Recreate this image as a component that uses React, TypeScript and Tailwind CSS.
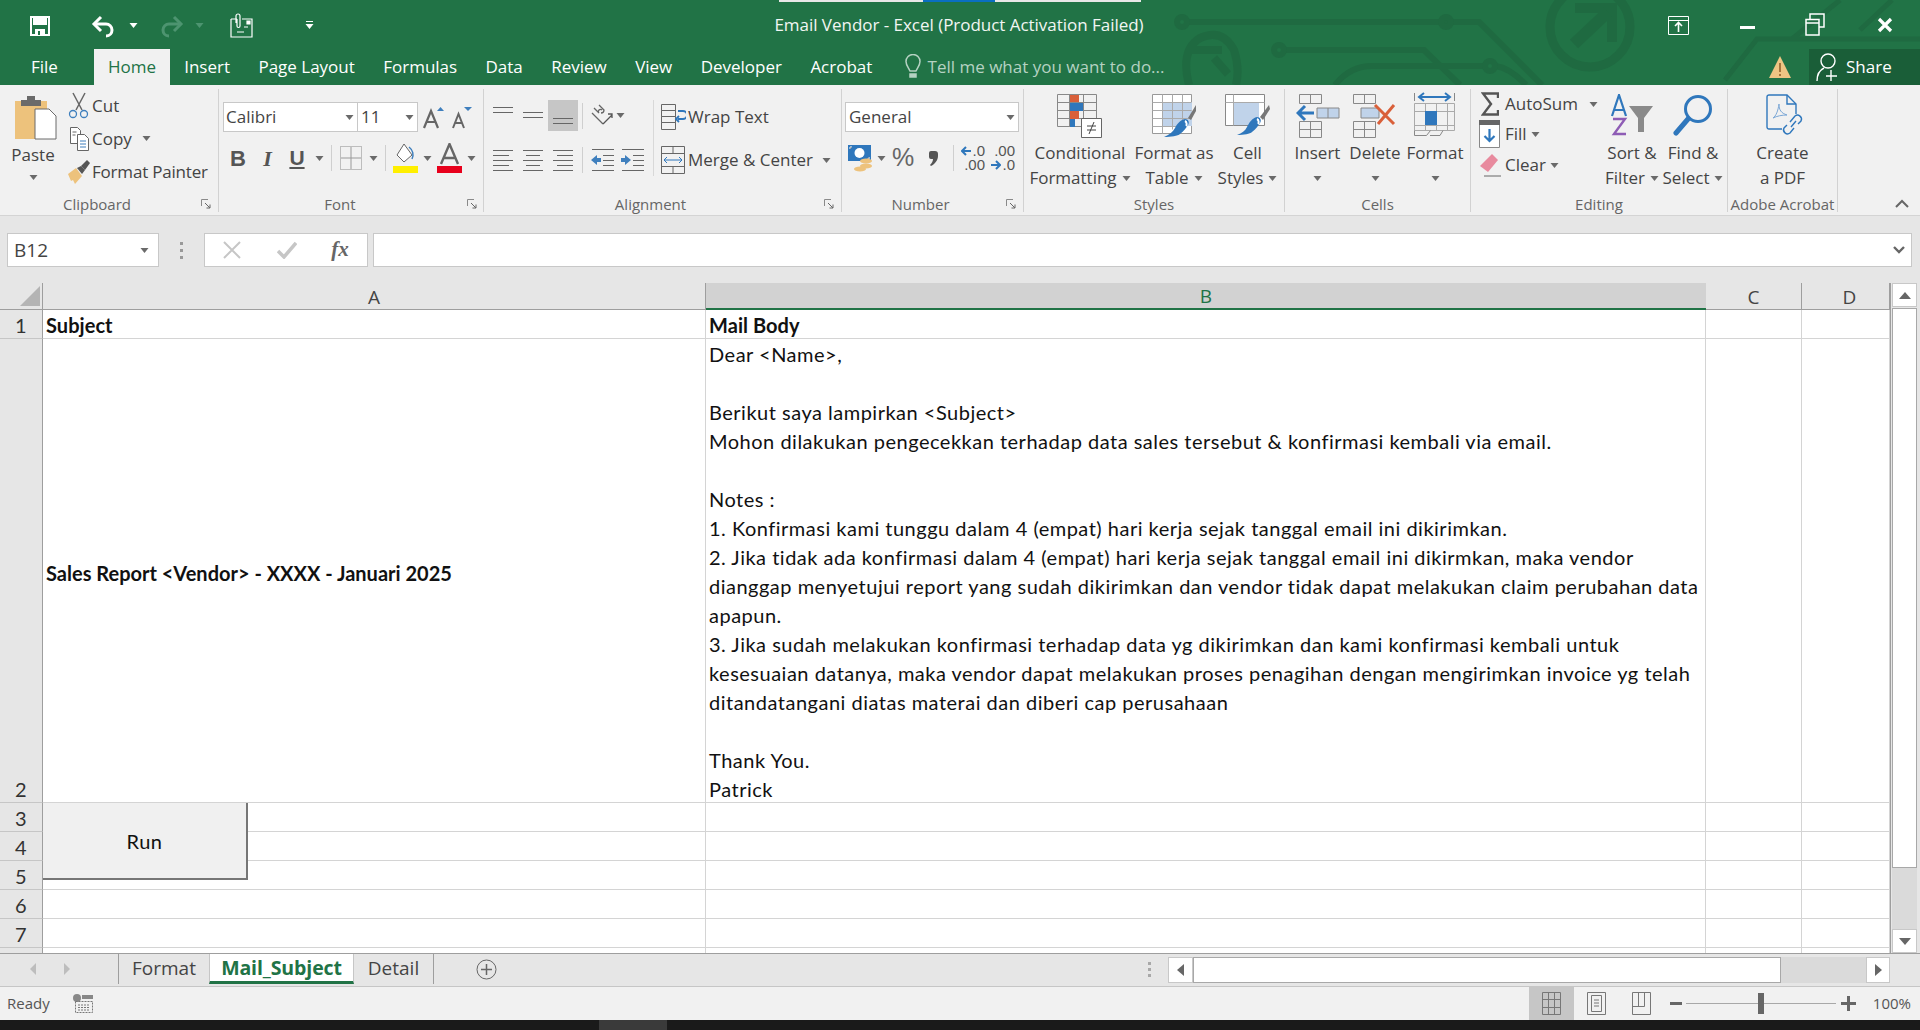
import type { ReactNode } from 'react';

// little dropdown triangle used all over the ribbon
function Caret({ className = '' }: { className?: string }) {
  return (
    <svg width="9" height="5" viewBox="0 0 9 5" className={`shrink-0 ${className}`}>
      <path d="M0.5 0h8L4.5 5z" fill="#6a6a6a" />
    </svg>
  );
}

function Launcher() {
  return (
    <svg width="11" height="11" viewBox="0 0 11 11">
      <path d="M.5 7V.5H7" fill="none" stroke="#8a8a8a" />
      <path d="M4 4l5 5M9 5.5V9H5.500" fill="none" stroke="#666" />
    </svg>
  );
}

function Group({ className, label, launcher, children }: { className: string; label?: string; launcher?: string; children: ReactNode }) {
  return (
    <div className={`flex flex-col h-[123px] shrink-0 border-r border-[#d2d2d2] ${className}`}>
      <div className="h-[107px] flex">{children}</div>
      <div className="h-[16px] flex items-center text-[15px] leading-[16px] text-[#666]">
        <div className="flex-1 text-center whitespace-nowrap">{label}</div>
        {launcher && <div className={`flex justify-center ${launcher}`}><Launcher /></div>}
      </div>
    </div>
  );
}

function Box({ className, children }: { className: string; children?: ReactNode }) {
  return <div className={`flex items-center justify-center shrink-0 ${className}`}>{children}</div>;
}

function Sep({ className = 'w-[10px]' }: { className?: string }) {
  return (
    <Box className={className}>
      <div className="w-px h-[26px] bg-[#cfcfcf]" />
    </Box>
  );
}

// big ribbon button: icon on top, two lines of text under it
function BigBtn({ className, icon, one, two, caret }: { className: string; icon: ReactNode; one: string; two?: string; caret?: boolean }) {
  return (
    <div className={`flex flex-col items-center shrink-0 text-[17px] leading-[24px] text-[#444] ${className}`}>
      <div className="h-[49px] pt-[5px] flex justify-center">{icon}</div>
      <div className="mt-[3px] whitespace-nowrap">{one}</div>
      <div className="mt-[1px] h-[24px] flex items-center gap-[5px] whitespace-nowrap">
        {two}
        {caret && <Caret />}
      </div>
    </div>
  );
}

function Lines({ y, x1 = 1, x2 = 23, w = 24, h = 24, color = '#666' }: { y: number[]; x1?: number; x2?: number; w?: number; h?: number; color?: string }) {
  return (
    <svg width={w} height={h} viewBox={`0 0 ${w} ${h}`}>
      {y.map((v) => (
        <path key={v} d={`M${x1} ${v}.5H${x2}`} stroke={color} />
      ))}
    </svg>
  );
}

function AlignLines({ kind }: { kind: 'l' | 'c' | 'r' }) {
  const rows = [2, 7, 12, 17, 22];
  const s = kind === 'l' ? [1, 21, 1, 17, 1, 21, 1, 17, 1, 21] : kind === 'c' ? [1, 21, 4, 18, 1, 21, 4, 18, 1, 21] : [1, 21, 5, 21, 1, 21, 5, 21, 1, 21];
  return (
    <svg width="22" height="24" viewBox="0 0 22 24">
      {rows.map((v, i) => (
        <path key={v} d={`M${s[i * 2]} ${v}.5H${s[i * 2 + 1]}`} stroke="#666" />
      ))}
    </svg>
  );
}

function TitleBar() {
  const tabs = ['Insert', 'Page Layout', 'Formulas', 'Data', 'Review', 'View', 'Developer', 'Acrobat'];
  return (
    <div className="relative h-[85px] bg-[#217346] text-white shrink-0 overflow-hidden">
      <svg width="1920" height="85" viewBox="0 0 1920 85" className="absolute inset-0" fill="none" stroke="#1f6a41" strokeWidth="6">
        <path d="M1186 22H1479L1542 85" />
        <circle cx="1182" cy="22" r="5" />
        <circle cx="1446" cy="22" r="5" />
        <path d="M1283 50H1424L1460 85" />
        <circle cx="1279" cy="50" r="5" />
        <path d="M1335 85Q1350 66 1372 66H1484M1496 66Q1510 68 1526 85" />
        <circle cx="1490" cy="66" r="5" />
        <path d="M1189 85Q1180 50 1200 38Q1222 28 1234 50Q1240 68 1236 85" strokeWidth="8" />
        <path d="M1190 50H1222M1214 58L1228 74" strokeWidth="8" />
        <circle cx="1590" cy="27" r="40" strokeWidth="9" />
        <path d="M1575 8H1612V42" strokeWidth="10" />
        <path d="M1608 12L1574 44" strokeWidth="12" />
        <path d="M1725 80L1757 39H1920M1792 39L1840 0M1860 30L1892 0" strokeWidth="5" />
      </svg>

      <div className="absolute top-0 left-[779px] w-[362px] h-[2px] bg-[#e8e8e8]">
        <div className="ml-[144px] w-[72px] h-[2px] bg-[#0a6fc2]" />
      </div>

      <div className="relative h-[49px] grid grid-cols-[1fr_auto_1fr] items-center">
        <div className="flex items-center pt-[2px]">
          <Box className="w-[40px] ml-[20px]">
            <svg width="20" height="20" viewBox="0 0 20 20">
              <path d="M1 1h18v18H1z" fill="none" stroke="#fff" strokeWidth="2" />
              <path d="M3 2h14v7H3zM5 13h10v6H5z" fill="#fff" />
              <path d="M8 15h2v4H8z" fill="#217346" />
            </svg>
          </Box>
          <Box className="w-[30px] ml-[29px]">
            <svg width="26" height="26" viewBox="0 0 26 26" fill="none" stroke="#fff" strokeWidth="3">
              <path d="M10 4L3 11l7 7" />
              <path d="M4 11h11a6 6 0 0 1 6 6c0 3-2 6-6 6" />
            </svg>
          </Box>
          <Caret className="ml-[10px] brightness-[3]" />
          <Box className="w-[30px] ml-[18px]">
            <svg width="26" height="26" viewBox="0 0 26 26" fill="none" stroke="#4d9470" strokeWidth="3">
              <path d="M16 4l7 7-7 7" />
              <path d="M22 11H11a6 6 0 0 0-6 6c0 3 2 6 6 6" />
            </svg>
          </Box>
          <svg width="9" height="5" viewBox="0 0 9 5" className="ml-[9px]"><path d="M.5 0h8l-4 5z" fill="#4d9470" /></svg>
          <Box className="w-[26px] ml-[25px]">
            <svg width="24" height="26" viewBox="0 0 24 26" fill="none" stroke="#fff" strokeWidth="1.2">
              <path d="M1 6h6M12 6h10v18H1V6" />
              <path d="M6 10V3a2 2 0 0 1 4 0v10a1.500 1.500 0 0 1-3 0V6" />
              <path d="M14 14h4M7 19h7" />
              <path d="M17 8h3v3h-3z" fill="#fff" />
            </svg>
          </Box>
          <svg width="9" height="9" viewBox="0 0 9 9" className="ml-[50px]"><path d="M1 0h7v1H1zM.5 3h8l-4 5z" fill="#fff" /></svg>
        </div>
        <div className="text-[17px] tracking-[-0.030px] -translate-x-[1px] text-[#f1f6f3] whitespace-nowrap">Email Vendor - Excel (Product Activation Failed)</div>
        <div className="flex items-center justify-end pt-[1px]">
          <Box className="w-[22px]">
            <svg width="21" height="19" viewBox="0 0 21 19" fill="none" stroke="#fff">
              <path d="M.5.500h20v18H.5zM.5 4.500h20" />
              <path d="M10.500 16V7M7 10l3.500-3.500L14 10" strokeWidth="1.600" />
            </svg>
          </Box>
          <Box className="w-[16px] ml-[50px]"><div className="w-[15px] h-[3px] bg-white mt-[5px]" /></Box>
          <Box className="w-[20px] ml-[50px]">
            <svg width="20" height="24" viewBox="0 0 20 24" fill="none" stroke="#fff" strokeWidth="1.500">
              <path d="M5 6V1h14v13h-5" />
              <path d="M1 6.500h13V22H1zM1 10h13" />
            </svg>
          </Box>
          <Box className="w-[16px] ml-[52px] mr-[27px]">
            <svg width="16" height="16" viewBox="0 0 16 16"><path d="M2 2l12 12M14 2L2 14" stroke="#fff" strokeWidth="3.200" /></svg>
          </Box>
        </div>
      </div>

      <div className="relative h-[36px] flex items-stretch text-[17px] leading-[36px] whitespace-nowrap">
        <div className="w-[94px] pl-[31px] shrink-0">File</div>
        <div className="w-[76px] text-center bg-[#f1f1f1] text-[#217346] shrink-0">Home</div>
        {tabs.map((t) => (
          <div key={t} className="px-[14.200px] first:pl-[15px] shrink-0">{t}</div>
        ))}
        <Box className="w-[24px] ml-[14px]">
          <svg width="16" height="26" viewBox="0 0 16 26" fill="none" stroke="#b5d2c2" strokeWidth="1.500">
            <path d="M5 17C3 13 1 11 1 7.500a7 7 0 0 1 14 0C15 11 13 13 11 17z" />
            <path d="M5 20h6v3H5z" fill="#b5d2c2" />
          </svg>
        </Box>
        <div className="ml-[3px] text-[#b5d2c2]">Tell me what you want to do...</div>
        <div className="flex-1" />
        <Box className="w-[24px] mr-[17px]">
          <svg width="24" height="24" viewBox="0 0 24 24">
            <path d="M12 1L23 23H1z" fill="#edc584" />
            <path d="M12 8v9M12 19v2" stroke="#8a5a24" strokeWidth="1.500" />
          </svg>
        </Box>
        <div className="w-[111px] bg-[#1a5e38] flex items-center pl-[7px] shrink-0">
          <svg width="24" height="30" viewBox="0 0 24 30" fill="none" stroke="#fff" strokeWidth="1.400">
            <circle cx="12" cy="9" r="7" />
            <path d="M1 29c0-7 3-11 7-13M15 18v11M10 24h11" />
          </svg>
          <span className="ml-[6px]">Share</span>
        </div>
      </div>
    </div>
  );
}

function Ribbon() {
  const label = 'text-[17px] text-[#444] whitespace-nowrap';
  return (
    <div className="h-[131px] bg-[#f1f1f1] border-b border-[#d4d4d4] pt-[4px] flex shrink-0">
      <Group className="w-[219px]" label="Clipboard" launcher="w-[24px]">
        <div className="w-[66px] flex flex-col items-center text-[17px] leading-[20px] text-[#444]">
          <svg width="42" height="46" viewBox="0 0 42 46" className="mt-[5px] ml-[6px]">
            <path d="M0 7h32v38H0z" fill="#edc27c" />
            <path d="M6 6h20v6H6zM12 2h8v5h-8z" fill="#6a6a6a" />
            <path d="M20 22h14l7 7v23H20z" fill="#fff" stroke="#6a6a6a" transform="translate(0 -7)" />
          </svg>
          <div className="mt-[5px]">Paste</div>
          <Caret className="mt-[10px]" />
        </div>
        <div className="flex flex-col">
          <div className={`h-[33px] flex items-center ${label}`}>
            <Box className="w-[26px]">
              <svg width="22" height="27" viewBox="0 0 22 27" fill="none">
                <path d="M5 1l9 17M17 1L8 18" stroke="#666" strokeWidth="1.500" />
                <circle cx="5" cy="22" r="3.500" stroke="#3f7fbd" strokeWidth="1.300" />
                <circle cx="16" cy="22" r="3.500" stroke="#3f7fbd" strokeWidth="1.300" />
              </svg>
            </Box>
            Cut
          </div>
          <div className={`h-[33px] flex items-center ${label}`}>
            <Box className="w-[26px]">
              <svg width="21" height="26" viewBox="0 0 21 26" fill="none" stroke="#666">
                <path d="M1.500 1.500h7l3 3v13h-10z" fill="#fff" />
                <path d="M8.500 8.500h7l4 4v12h-11z" fill="#fff" />
                <path d="M11 15h6M11 18h6M11 21h6" stroke="#3f7fbd" />
                <path d="M3.500 6h4M3.500 9h3" />
              </svg>
            </Box>
            Copy
            <Caret className="ml-[10px]" />
          </div>
          <div className={`h-[33px] flex items-center tracking-[-0.200px] ${label}`}>
            <Box className="w-[26px]">
              <svg width="24" height="26" viewBox="0 0 24 26">
                <path d="M1 15l8-6 6 8-7 8-2-4-2 1z" fill="#edc27c" />
                <path d="M10 9l5 6 3-4-4-4z" fill="#555" />
                <path d="M14 7l6-6 3 3-5 7z" fill="#555" />
              </svg>
            </Box>
            Format Painter
          </div>
        </div>
      </Group>

      <Group className="w-[265px]" label="Font" launcher="w-[22px]">
        <div className="flex flex-col pl-[4px]">
          <div className="mt-[13px] h-[30px] flex items-center">
            <div className="w-[135px] h-[30px] bg-white border border-[#c8c8c8] flex items-center justify-between pl-[2px] pr-[3px] text-[17px] text-[#444]">
              Calibri
              <Caret />
            </div>
            <div className="w-[61px] h-[30px] -ml-px bg-white border border-[#c8c8c8] flex items-center justify-between pl-[3px] pr-[3px] text-[17px] text-[#444]">
              11
              <Caret />
            </div>
            <Box className="w-[24px] ml-[4px]">
              <svg width="24" height="26" viewBox="0 0 24 26">
                <path d="M2 24L9 7l7 17M5 18h8" fill="none" stroke="#666" strokeWidth="2.200" />
                <path d="M15 7l3.500-4L22 7z" fill="#3f7fbd" />
              </svg>
            </Box>
            <Box className="w-[24px] ml-[4px]">
              <svg width="24" height="26" viewBox="0 0 24 26">
                <path d="M3 24L8.500 10 14 24M5 19h7" fill="none" stroke="#666" strokeWidth="2" />
                <path d="M14 3h8l-4 4z" fill="#3f7fbd" />
              </svg>
            </Box>
          </div>
          <div className="mt-[13px] h-[26px] flex items-center text-[#555]">
            <Box className="w-[30px] font-bold text-[22px] font-['Liberation_Sans',sans-serif]">B</Box>
            <Box className="w-[29px] font-bold italic text-[22px] font-['Liberation_Serif',serif]">I</Box>
            <Box className="w-[30px] font-bold text-[21px] underline font-['Liberation_Sans',sans-serif]">U</Box>
            <Box className="w-[14px]"><Caret /></Box>
            <Sep />
            <Box className="w-[30px]">
              <svg width="22" height="24" viewBox="0 0 22 24" fill="none">
                <path d="M.5.500h21v23H.5z" stroke="#888" strokeDasharray="1 1" />
                <path d="M11 1v22M1 12h20" stroke="#999" />
              </svg>
            </Box>
            <Box className="w-[14px]"><Caret /></Box>
            <Sep />
            <Box className="w-[30px]">
              <svg width="25" height="30" viewBox="0 0 25 30">
                <path d="M11 1l-7 11 7 7 8-7z" fill="#fff" stroke="#666" />
                <path d="M16 4c4 3 5 8 3 12" fill="none" stroke="#3f7fbd" strokeWidth="1.500" />
                <path d="M0 23h25v7H0z" fill="#ffef00" />
              </svg>
            </Box>
            <Box className="w-[14px]"><Caret /></Box>
            <Box className="w-[30px]">
              <svg width="25" height="30" viewBox="0 0 25 30">
                <path d="M4 21L12.500 1 21 21M7 15h11" fill="none" stroke="#666" strokeWidth="2.400" />
                <path d="M0 23h25v7H0z" fill="#e8001c" />
              </svg>
            </Box>
            <Box className="w-[14px]"><Caret /></Box>
          </div>
        </div>
      </Group>

      <Group className="w-[358px]" label="Alignment" launcher="w-[24px]">
        <div className="pl-[4px] w-[164px] shrink-0">
          <div className="mt-[11px] h-[31px] flex items-center">
            <Box className="w-[30px]"><Lines w={22} h={24} x2={21} y={[3, 8]} /></Box>
            <Box className="w-[30px]"><Lines w={22} h={24} x2={21} y={[8, 13]} /></Box>
            <Box className="w-[30px] h-[31px] bg-[#c6c6c6]"><Lines w={22} h={24} x2={21} y={[14, 19]} /></Box>
            <Sep className="w-[8px]" />
            <Box className="w-[30px] ml-[2px]">
              <svg width="24" height="24" viewBox="0 0 24 24" fill="none" stroke="#666" strokeWidth="1.300">
                <path d="M1 9l11 11M3 4l5 5a2 2 0 0 1 3-3M8 1l5 5a3 3 0 0 1-3 3" />
                <path d="M12 20l9-9M17 10h4v4" stroke="#555" />
              </svg>
            </Box>
            <Caret className="-ml-[2px]" />
          </div>
          <div className="mt-[15px] h-[28px] flex items-center">
            <Box className="w-[30px]"><AlignLines kind="l" /></Box>
            <Box className="w-[30px]"><AlignLines kind="c" /></Box>
            <Box className="w-[30px]"><AlignLines kind="r" /></Box>
            <Sep className="w-[8px]" />
            <Box className="w-[30px] ml-[2px]">
              <svg width="24" height="24" viewBox="0 0 24 24">
                <path d="M0 12l6-5v3h4v4H6v3z" fill="#3f7fbd" />
                <path d="M1 1.500h22M12 7.500h11M12 12.500h11M12 17.500h11M1 22.500h22" stroke="#666" />
              </svg>
            </Box>
            <Box className="w-[30px]">
              <svg width="24" height="24" viewBox="0 0 24 24">
                <path d="M10 12L4 7v3H0v4h4v3z" fill="#3f7fbd" />
                <path d="M1 1.500h22M12 7.500h11M12 12.500h11M12 17.500h11M1 22.500h22" stroke="#666" />
              </svg>
            </Box>
          </div>
        </div>
        <Box className="w-px h-[76px] bg-[#d8d8d8] mt-[11px] ml-[5px]" />
        <div className="ml-[7px]">
          <div className={`mt-[14px] h-[28px] flex items-center ${label}`}>
            <svg width="25" height="26" viewBox="0 0 25 26" fill="none" className="mr-[2px]">
              <path d="M.5.500h14v6H.5zM.5 6.500h14v6H.5zM.5 12.500h14v6H.5zM.5 18.500h14v7H.5z" stroke="#666" />
              <path d="M17 7h5a2 2 0 0 1 0 8h-5M18 12l-3 3 3 3" stroke="#2f77bc" strokeWidth="1.800" />
            </svg>
            Wrap Text
          </div>
          <div className={`mt-[15px] h-[28px] flex items-center ${label}`}>
            <svg width="24" height="28" viewBox="0 0 24 28" fill="none" className="mr-[3px]">
              <path d="M.5.500h23v27H.5zM.5 7.500h23M.5 20.500h23M12 .5v7M12 20.500v7" stroke="#666" />
              <path d="M3 14h18M6 11l-3 3 3 3M18 11l3 3-3 3" stroke="#2f77bc" />
            </svg>
            Merge &amp; Center
            <Caret className="ml-[9px]" />
          </div>
        </div>
      </Group>

      <Group className="w-[182px]" label="Number" launcher="w-[24px]">
        <div className="pl-[3px]">
          <div className="mt-[13px] w-[174px] h-[30px] bg-white border border-[#c8c8c8] flex items-center justify-between pl-[3px] pr-[3px] text-[17px] text-[#444]">
            General
            <Caret />
          </div>
          <div className="mt-[13px] h-[26px] flex items-center text-[#666]">
            <Box className="w-[30px]">
              <svg width="24" height="28" viewBox="0 0 24 28">
                <path d="M0 1h23v16H0z" fill="#2f77bc" />
                <circle cx="11.500" cy="9" r="5" fill="#fff" />
                <path d="M4 3h-2v2M19 15h2v-2" stroke="#fff" />
                <ellipse cx="18" cy="17" rx="6" ry="2.500" fill="#edc27c" />
                <ellipse cx="18" cy="22" rx="6" ry="2.500" fill="#edc27c" />
                <ellipse cx="12" cy="25" rx="6" ry="2.500" fill="#edc27c" />
              </svg>
            </Box>
            <Box className="w-[13px]"><Caret /></Box>
            <Box className="w-[30px] text-[25px] font-['Liberation_Sans',sans-serif]">%</Box>
            <Box className="w-[31px]">
              <svg width="9" height="15" viewBox="0 0 9 15"><path d="M2 0h4a3 3 0 0 1 3 3v2c0 4-3 8-7 10l-1-1c2-2 3-4 3-6H2a2 2 0 0 1-2-2V2a2 2 0 0 1 2-2z" fill="#555" /></svg>
            </Box>
            <Sep className="w-[8px]" />
            <div className="w-[28px] text-[15px] leading-[12px] font-['Liberation_Sans',sans-serif] text-[#555] text-right">
              <div className="flex items-center justify-end gap-[1px]">
                <svg width="10" height="10" viewBox="0 0 10 10" fill="none"><path d="M10 5H2M5 1L1 5l4 4" stroke="#2f77bc" strokeWidth="2" /></svg>
                .0
              </div>
              <div className="mt-[2px]">.00</div>
            </div>
            <div className="w-[30px] text-[15px] leading-[12px] font-['Liberation_Sans',sans-serif] text-[#555] text-right">
              <div>.00</div>
              <div className="mt-[2px] flex items-center justify-end gap-[1px]">
                <svg width="10" height="10" viewBox="0 0 10 10" fill="none"><path d="M0 5h8M5 1l4 4-4 4" stroke="#2f77bc" strokeWidth="2" /></svg>
                .0
              </div>
            </div>
          </div>
        </div>
      </Group>

      <Group className="w-[261px]" label="Styles">
        <BigBtn
          className="w-[106px] ml-[3px]"
          one="Conditional"
          two="Formatting"
          caret
          icon={
            <svg width="46" height="44" viewBox="0 0 46 44" fill="none">
              <path d="M.5.500h39v32H.5zM.5 8.500h39M.5 16.500h39M.5 24.500h39M12.500.5v32M26.500.5v32" stroke="#888" />
              <path d="M13 1h9v7h-9z" fill="#d9603a" />
              <path d="M13 9h13v8H13z" fill="#2f77bc" />
              <path d="M13 17h9v8h-9z" fill="#d9603a" />
              <path d="M13 25h5v8h-5z" fill="#2f77bc" />
              <path d="M24.500 24.500h20v19h-20z" fill="#fff" stroke="#666" />
              <path d="M30 32h9M30 36h9M37 28l-5 12" stroke="#444" />
            </svg>
          }
        />
        <BigBtn
          className="w-[82px]"
          one="Format as"
          two="Table"
          caret
          icon={
            <svg width="44" height="44" viewBox="0 0 44 44" fill="none">
              <path d="M.5.500h39v39H.5z" fill="#fff" stroke="#999" />
              <path d="M10 8h30v24H10z" fill="#c0d3ea" />
              <path d="M.5 8.500h39M.5 16.500h39M.5 24.500h39M.5 32.500h30M10.500.5v39M20.500.5v35M30.500.5v30" stroke="#aaa" />
              <path d="M44 11L36 24l3 2 5-9z" fill="#777" />
              <path d="M33 25c3 0 5 3 3 6s-4 6-8 9c-2 2-9 3-16 3 5-2 9-5 11-9s5-8 10-9z" fill="#2f77bc" />
              <path d="M33 27c2 1 2 4 1 5" stroke="#fff" strokeWidth="2" />
            </svg>
          }
        />
        <BigBtn
          className="w-[65px]"
          one="Cell"
          two="Styles"
          caret
          icon={
            <svg width="45" height="44" viewBox="0 0 45 44" fill="none">
              <path d="M.5.500h39v31H.5z" fill="#fff" stroke="#888" />
              <path d="M8 8h26v23H8z" fill="#c0d3ea" />
              <path d="M.5 8.500h39M8.500.5v31" stroke="#aaa" />
              <path d="M44 11L35 23l3 3 7-11z" fill="#777" />
              <path d="M32 23c3 0 5 3 3 6s-4 6-8 9c-2 2-8 3-15 3 5-2 8-4 10-8s5-9 10-10z" fill="#2f77bc" />
              <path d="M32 25c2 1 2 4 1 5" stroke="#fff" strokeWidth="2" />
            </svg>
          }
        />
      </Group>

      <Group className="w-[186px]" label="Cells">
        <BigBtn
          className="w-[59px] ml-[3px]"
          one="Insert"
          caret
          icon={
            <svg width="44" height="44" viewBox="0 0 44 44" fill="none">
              <path d="M3.500.5h22v9h-22zM14.500.5v9M3.500 27.500h22v16h-22zM3.500 35.500h22M14.500 27.500v16" stroke="#888" />
              <path d="M21 14h22v10H21z" fill="#c0d3ea" stroke="#888" />
              <path d="M32 14v10" stroke="#888" />
              <path d="M18 19H3M9 12l-7 7 7 7" stroke="#2f77bc" strokeWidth="3" />
            </svg>
          }
        />
        <BigBtn
          className="w-[56px]"
          one="Delete"
          caret
          icon={
            <svg width="44" height="44" viewBox="0 0 44 44" fill="none">
              <path d="M.5.5h22v9H.5zM11.500.5v9M.5 27.500h22v16H.5zM.5 35.500h22M11.500 27.500v16" stroke="#888" />
              <path d="M8 14h18v10H8z" fill="#c0d3ea" stroke="#888" />
              <path d="M22 11l19 19M41 11L25 30" stroke="#d9603a" strokeWidth="3" />
            </svg>
          }
        />
        <BigBtn
          className="w-[64px]"
          one="Format"
          caret
          icon={
            <svg width="42" height="48" viewBox="0 0 42 48" fill="none" className="-mt-[5px]">
              <path d="M.5 4v8M40.500 4v8" stroke="#888" />
              <path d="M5 8h31M10 4L5 8l5 4M31 4l5 4-5 4" stroke="#2f77bc" strokeWidth="2" />
              <path d="M.5 14.500h40v27H.5zM.5 22.500h40M.5 36.500h40M11.500 14.500v27M22.500 14.500v27M33.500 14.500v27" stroke="#aaa" />
              <path d="M11 22h12v14H11z" fill="#2f77bc" />
              <path d="M.5 41.500v5h12l4-5M16 46.500h10l3-5" stroke="#888" />
            </svg>
          }
        />
      </Group>

      <Group className="w-[257px]" label="Editing">
        <div className="w-[131px] shrink-0">
          <div className={`h-[30px] flex items-center ${label}`}>
            <Box className="w-[34px] pl-[3px]">
              <svg width="18" height="24" viewBox="0 0 18 24" fill="none"><path d="M17 6V1.500H2L10 12 2 22.500h15V18" stroke="#555" strokeWidth="2.400" /></svg>
            </Box>
            AutoSum
            <Caret className="ml-[11px]" />
          </div>
          <div className={`h-[30px] flex items-center ${label}`}>
            <Box className="w-[34px] pl-[3px]">
              <svg width="21" height="28" viewBox="0 0 21 28">
                <path d="M.5.500h20v27H.5z" fill="#fff" stroke="#888" />
                <path d="M0 0h21v5H0z" fill="#666" />
                <path d="M10.500 9v12M5.500 16l5 5 5-5" fill="none" stroke="#2f77bc" strokeWidth="2.200" />
              </svg>
            </Box>
            Fill
            <Caret className="ml-[4px]" />
          </div>
          <div className={`h-[32px] flex items-center ${label}`}>
            <Box className="w-[34px] pl-[3px]">
              <svg width="22" height="24" viewBox="0 0 22 24">
                <path d="M13 1l6 6L9 19l-8-6z" fill="#e88a9e" />
                <path d="M5 23h17" stroke="#666" />
              </svg>
            </Box>
            Clear
            <Caret className="ml-[4px]" />
          </div>
        </div>
        <BigBtn
          className="w-[60px]"
          one="Sort &"
          two="Filter"
          caret
          icon={
            <svg width="44" height="42" viewBox="0 0 44 42" fill="none">
              <path d="M2 22L9 1l7 21M4.500 16h9" stroke="#2f77bc" strokeWidth="2.200" />
              <path d="M3 25h12L4 40h12" stroke="#8e5cb5" strokeWidth="2.400" />
              <path d="M19 12h24L34 24v14h-6V24z" fill="#8a8a8a" />
            </svg>
          }
        />
        <BigBtn
          className="w-[62px]"
          one="Find &"
          two="Select"
          caret
          icon={
            <svg width="40" height="42" viewBox="0 0 40 42" fill="none">
              <circle cx="25" cy="15" r="12.500" stroke="#2f77bc" strokeWidth="3" />
              <path d="M15 25L3 39" stroke="#2f77bc" strokeWidth="5" strokeLinecap="round" />
            </svg>
          }
        />
      </Group>

      <Group className="w-[110px]" label="Adobe Acrobat">
        <BigBtn
          className="w-[109px]"
          one="Create"
          two="a PDF"
          icon={
            <svg width="40" height="44" viewBox="0 0 40 44" fill="none" stroke="#2f77bc" strokeWidth="1.400" className="ml-[6px]">
              <path d="M16 35H3a2 2 0 0 1-2-2V3a2 2 0 0 1 2-2h18l9 9v10" />
              <path d="M21 1v9h9" />
              <path d="M7 24c3-2 5-7 6-14 0 6 2 9 8 11-5 0-10 1-14 3z" stroke="#7ba7d6" strokeWidth="1" />
              <path d="M24 28l5-6a4 4 0 0 1 6 5l-3 3M28 34l-4 5a4 4 0 0 1-6-5l3-3M25 33l5-6" />
            </svg>
          }
        />
      </Group>

      <div className="flex-1 flex items-end justify-end pr-[11px] pb-[4px] h-[123px]">
        <svg width="14" height="9" viewBox="0 0 14 9" fill="none"><path d="M1 8l6-6 6 6" stroke="#666" strokeWidth="2" /></svg>
      </div>
    </div>
  );
}

function FormulaBar() {
  return (
    <div className="h-[67px] bg-[#e6e6e6] pt-[17px] flex items-start shrink-0">
      <div className="ml-[7px] w-[152px] h-[34px] bg-white border border-[#c8c8c8] flex items-center justify-between pl-[6px] pr-[9px] text-[19px] text-[#444]">
        B12
        <Caret />
      </div>
      <div className="w-[45px] h-[34px] flex flex-col items-center justify-center gap-[4px]">
        <div className="w-[3px] h-[3px] bg-[#999]" />
        <div className="w-[3px] h-[3px] bg-[#999]" />
        <div className="w-[3px] h-[3px] bg-[#999]" />
      </div>
      <div className="w-[164px] h-[34px] bg-white border border-[#c8c8c8] flex items-center">
        <Box className="w-[54px]">
          <svg width="18" height="18" viewBox="0 0 18 18"><path d="M1 1l16 16M17 1L1 17" stroke="#c6c6c6" strokeWidth="2" /></svg>
        </Box>
        <Box className="w-[56px]">
          <svg width="20" height="18" viewBox="0 0 20 18" fill="none"><path d="M1 10l6 6L19 2" stroke="#c6c6c6" strokeWidth="3.500" /></svg>
        </Box>
        <Box className="w-[50px] font-['Liberation_Serif',serif] italic font-bold text-[21px] text-[#666]">fx</Box>
      </div>
      <div className="ml-[5px] mr-[8px] flex-1 h-[34px] bg-white border border-[#c8c8c8] flex items-center justify-end pr-[6px]">
        <svg width="12" height="9" viewBox="0 0 12 9" fill="none"><path d="M1 1l5 5 5-5" stroke="#666" strokeWidth="2.400" /></svg>
      </div>
    </div>
  );
}

const body = [
  'Dear <Name>,',
  '',
  'Berikut saya lampirkan <Subject>',
  'Mohon dilakukan pengecekkan terhadap data sales tersebut & konfirmasi kembali via email.',
  '',
  'Notes :',
  '1. Konfirmasi kami tunggu dalam 4 (empat) hari kerja sejak tanggal email ini dikirimkan.',
  '2. Jika tidak ada konfirmasi dalam 4 (empat) hari kerja sejak tanggal email ini dikirmkan, maka vendor',
  'dianggap menyetujui report yang sudah dikirimkan dan vendor tidak dapat melakukan claim perubahan data',
  'apapun.',
  '3. Jika sudah melakukan konfirmasi terhadap data yg dikirimkan dan kami konfirmasi kembali untuk',
  'kesesuaian datanya, maka vendor dapat melakukan proses penagihan dengan mengirimkan invoice yg telah',
  'ditandatangani diatas materai dan diberi cap perusahaan',
  '',
  'Thank You.',
  'Patrick',
];

function RowHead({ n, end }: { n?: number; end?: boolean }) {
  return (
    <div className={`bg-[#e6e6e6] border-r border-[#9e9e9e] border-b border-b-[#c6c6c6] flex justify-center text-[20px] text-[#333] ${end ? 'items-end leading-[26px]' : 'items-center pt-[2px]'}`}>
      {n}
    </div>
  );
}

function Sheet() {
  const cell = 'border-r border-b border-[#d4d4d4]';
  const head = "bg-[#e6e6e6] border-r border-b border-[#9e9e9e] flex items-center justify-center pt-[2px] font-['Open_Sans',sans-serif] text-[19px] tracking-normal text-[#444]";
  const empties = [3, 4, 5, 6, 7];
  return (
    <div className="h-[670px] flex shrink-0 bg-white">
      <div className="relative w-[1890px] grid grid-cols-[43px_663px_1000px_96px_88px] grid-rows-[27px_29px_464px_29px_29px_29px_29px_29px_5px] font-['Lato',sans-serif] text-[20px] tracking-[0.500px] text-[#111] overflow-hidden">
        <div className="bg-[#e6e6e6] border-r border-b border-[#9e9e9e] flex items-end justify-end pb-[3px] pr-[2px]">
          <svg width="20" height="20" viewBox="0 0 20 20"><path d="M20 0v20H0z" fill="#b4b4b4" /></svg>
        </div>
        <div className={head}>A</div>
        <div className="bg-[#d2d2d2] border-b-2 border-[#217346] flex items-center justify-center pt-[2px] font-['Open_Sans',sans-serif] text-[19px] tracking-normal text-[#217346]">B</div>
        <div className={head}>C</div>
        <div className={`${head} pl-[8px]`}>D</div>

        <RowHead n={1} />
        <div className={`${cell} font-bold tracking-[0.050px] flex items-center pl-[3px] pt-[2px]`}>Subject</div>
        <div className={`${cell} font-bold tracking-[0.050px] flex items-center pl-[3px] pt-[2px]`}>Mail Body</div>
        <div className={cell} />
        <div className={cell} />

        <RowHead n={2} end />
        <div className={`${cell} font-bold tracking-normal flex items-center pl-[3px] pt-[4px]`}>{'Sales Report <Vendor> - XXXX - Januari 2025'}</div>
        <div className={`${cell} pl-[3px] pt-[1px] leading-[29px] whitespace-pre`}>
          {body.map((line, i) => (
            <div key={i} className="h-[29px]">{line}</div>
          ))}
        </div>
        <div className={cell} />
        <div className={cell} />

        {empties.map((n) => (
          <div key={n} className="contents">
            <RowHead n={n} />
            <div className={cell} />
            <div className={cell} />
            <div className={cell} />
            <div className={cell} />
          </div>
        ))}
        <div className="bg-[#e6e6e6] border-r border-[#9e9e9e]" />
        <div className="border-r border-[#d4d4d4]" />
        <div className="border-r border-[#d4d4d4]" />
        <div className="border-r border-[#d4d4d4]" />
        <div className="border-r border-[#d4d4d4]" />

        <div className="absolute left-[43px] top-[520px] w-[205px] h-[77px] bg-[#f0f0f0] border-r-2 border-b-2 border-[#767676] flex items-center justify-center pt-[1px] text-[#111]">
          Run
        </div>
      </div>

      <div className="w-[30px] bg-[#e6e6e6] border-l border-[#9e9e9e] pl-[1px] flex flex-col">
        <div className="w-[25px] h-[24px] bg-white border border-[#c8c8c8] flex items-center justify-center">
          <svg width="12" height="7" viewBox="0 0 12 7"><path d="M6 0l6 7H0z" fill="#666" /></svg>
        </div>
        <div className="w-[25px] h-[560px] bg-white border border-[#a8a8a8] mt-[1px]" />
        <div className="w-[25px] flex-1 bg-[#dadada]" />
        <div className="w-[25px] h-[24px] bg-white border border-[#c8c8c8] flex items-center justify-center">
          <svg width="12" height="7" viewBox="0 0 12 7"><path d="M6 7L0 0h12z" fill="#666" /></svg>
        </div>
      </div>
    </div>
  );
}

function TabStrip() {
  return (
    <div className="h-[34px] bg-[#e6e6e6] border-t border-[#9e9e9e] border-b border-b-[#c6c6c6] flex items-start shrink-0 text-[19px] leading-[29px] text-[#444]">
      <div className="w-[118px] h-[30px] flex items-center shrink-0">
        <svg width="6" height="12" viewBox="0 0 6 12" className="ml-[30px]"><path d="M6 0v12L0 6z" fill="#bdbdbd" /></svg>
        <svg width="6" height="12" viewBox="0 0 6 12" className="ml-[28px]"><path d="M0 0v12l6-6z" fill="#bdbdbd" /></svg>
      </div>
      <div className="w-[91px] h-[30px] border-l border-[#9e9e9e] text-center shrink-0">Format</div>
      <div className="w-[145px] h-[30px] bg-white border-x border-[#c6c6c6] border-b-[3px] border-b-[#217346] text-center font-bold text-[#217346] leading-[28px] text-[19.500px] tracking-[-0.100px] shrink-0">Mail_Subject</div>
      <div className="w-[80px] h-[30px] border-r border-[#9e9e9e] text-center shrink-0">Detail</div>
      <Box className="w-[24px] h-[30px] ml-[40px]">
        <svg width="21" height="21" viewBox="0 0 21 21" fill="none" stroke="#666">
          <circle cx="10.500" cy="10.500" r="9.500" />
          <path d="M10.500 5v11M5 10.500h11" strokeWidth="1.500" />
        </svg>
      </Box>
      <div className="flex-1 h-[30px] flex justify-end items-center pr-[17px]">
        <div className="flex flex-col gap-[3px]">
          <div className="w-[3px] h-[3px] bg-[#a8a8a8]" />
          <div className="w-[3px] h-[3px] bg-[#a8a8a8]" />
          <div className="w-[3px] h-[3px] bg-[#a8a8a8]" />
        </div>
      </div>
      <div className="w-[722px] mt-[3px] h-[26px] flex shrink-0">
        <Box className="w-[25px] h-[26px] bg-white border border-[#c8c8c8]">
          <svg width="7" height="12" viewBox="0 0 7 12"><path d="M7 0v12L0 6z" fill="#666" /></svg>
        </Box>
        <div className="w-[588px] h-[26px] bg-white border border-[#a8a8a8]" />
        <div className="w-[85px] h-[26px] bg-[#dadada]" />
        <Box className="w-[24px] h-[26px] bg-white border border-[#c8c8c8]">
          <svg width="7" height="12" viewBox="0 0 7 12"><path d="M0 0v12l7-6z" fill="#666" /></svg>
        </Box>
      </div>
      <div className="w-[30px] shrink-0" />
    </div>
  );
}

function StatusBar() {
  return (
    <div className="h-[33px] bg-[#f1f1f1] flex items-center shrink-0 text-[15px] text-[#555]">
      <span className="ml-[7px]">Ready</span>
      <svg width="20" height="19" viewBox="0 0 20 19" className="ml-[23px]" fill="none">
        <circle cx="4" cy="4" r="4" fill="#888" />
        <path d="M9 1h11v4H9z" fill="#888" />
        <path d="M2.500 7.500h17v11h-17zM5 11h12M5 13.500h12M5 16h12" stroke="#777" strokeDasharray="2 1" />
      </svg>
      <div className="flex-1" />
      <Box className="w-[45px] h-[33px] bg-[#c6c6c6]">
        <svg width="19" height="23" viewBox="0 0 19 23" fill="none" stroke="#777">
          <path d="M.5.500h18v22H.5zM.5 7.500h18M.5 15.500h18M6.500.5v22M12.500.5v22" />
        </svg>
      </Box>
      <Box className="w-[45px]">
        <svg width="19" height="23" viewBox="0 0 19 23" fill="none" stroke="#777">
          <path d="M.5.500h18v22H.5zM4.500 3.500h10v16h-10zM7 8h5M7 11h5M7 14h5" />
        </svg>
      </Box>
      <Box className="w-[46px]">
        <svg width="19" height="23" viewBox="0 0 19 23" fill="none" stroke="#777">
          <path d="M.5.500h18v22H.5zM.5 14.500h12M6.500.5v14M12.500.5v14" />
        </svg>
      </Box>
      <div className="ml-[5px] w-[12px] h-[3px] bg-[#666]" />
      <div className="ml-[4px] w-[150px] flex items-center">
        <div className="flex-1 h-px bg-[#a8a8a8]" />
        <div className="w-[6px] h-[21px] bg-[#666]" />
        <div className="flex-1 h-px bg-[#a8a8a8]" />
      </div>
      <svg width="15" height="15" viewBox="0 0 15 15" className="ml-[5px]"><path d="M7.500 0v15M0 7.500h15" stroke="#666" strokeWidth="3" /></svg>
      <span className="ml-[17px] mr-[9px]">100%</span>
    </div>
  );
}

export default function App() {
  return (
    <div className="w-[1920px] h-[1030px] flex flex-col overflow-hidden bg-white font-['Open_Sans',sans-serif]">
      <TitleBar />
      <Ribbon />
      <FormulaBar />
      <Sheet />
      <TabStrip />
      <StatusBar />
      <div className="h-[10px] bg-[#1a1a1a] shrink-0">
        <div className="ml-[599px] w-[68px] h-[10px] bg-[#3a3a3a]" />
      </div>
    </div>
  );
}
